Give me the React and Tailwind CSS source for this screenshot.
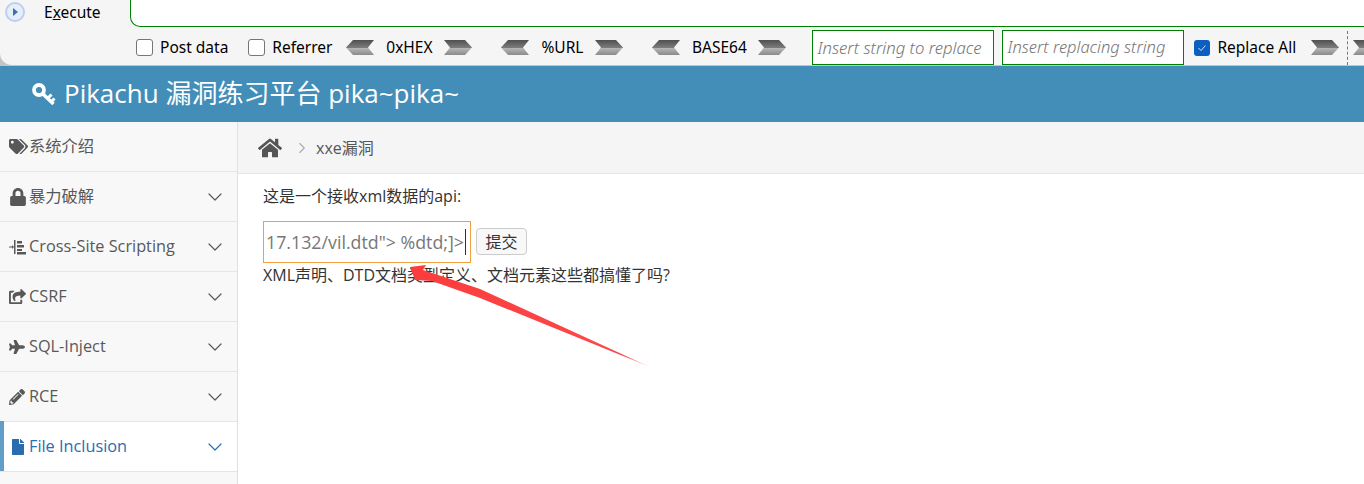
import { FaTags, FaLock, FaShareSquare, FaPlane, FaPencilAlt, FaFile, FaHome } from 'react-icons/fa'
import { ChevronDown, ChevronRight } from 'lucide-react'

const sans = 'font-["Open_Sans","Noto_Sans_CJK_SC",sans-serif]'

function ListIcon() {
  return (
    <svg width="17" height="16" viewBox="0 0 17 16" fill="#585858">
      <path d="M0 7.500h3V6l2 2-2 2V8.500H0z" />
      <rect x="5" y="1" width="1.500" height="14" />
      <rect x="8" y="2" width="5" height="2.500" />
      <rect x="8" y="6" width="7" height="2.500" />
      <rect x="8" y="10" width="5" height="2" />
      <rect x="8" y="13" width="9" height="2.500" />
    </svg>
  )
}

function KeyIcon() {
  return (
    <svg width="25" height="24" viewBox="0 0 25 24" fill="none" stroke="white">
      <circle cx="8" cy="8" r="5" strokeWidth="3.800" />
      <path d="M11.500 11.500L22.500 22" strokeWidth="3.500" />
      <path d="M17 16l3.500-3.500M20.500 19.500l3-3" strokeWidth="3" />
    </svg>
  )
}

function Arrow({ left }) {
  // grey encoding arrows in the hackbar, they only differ by direction
  const points = left ? '0,7.500 7,0 28,0 22,7.500 28,15 7,15' : '0,0 21,0 28,7.500 21,15 0,15 6,7.500'
  const id = left ? 'barLeft' : 'barRight'
  return (
    <svg width="28" height="15" viewBox="0 0 28 15" className="shrink-0">
      <defs>
        <linearGradient id={id} x1="0" y1="0" x2="0" y2="1">
          <stop offset="0" stopColor="#4f4f4f" />
          <stop offset="0.5" stopColor="#7b7b7b" />
          <stop offset="0.55" stopColor="#b5b5b5" />
          <stop offset="1" stopColor="#8a8a8a" />
        </linearGradient>
      </defs>
      <polygon points={points} fill={`url(#${id})`} />
    </svg>
  )
}

function Encoder({ label, width, className }) {
  return (
    <div className={`flex items-center shrink-0 ${className}`}>
      <Arrow left />
      <span className={`${width} text-center text-[15.500px] leading-[20px] -mt-[2px] text-black`}>{label}</span>
      <Arrow />
    </div>
  )
}

function Check({ label, className }) {
  return (
    <label className={`flex items-center shrink-0 whitespace-nowrap text-[15.500px] text-black ${className}`}>
      <span className="w-[17px] h-[17px] rounded-[3px] border border-[#767676] bg-white mr-[7px]" />
      {label}
    </label>
  )
}

function HackBar() {
  return (
    <div className="h-[66px] bg-[#c4c4c4] font-['Noto_Sans',sans-serif]">
      <div className="h-[65px] bg-[#f5f5f5] rounded-bl-[12px] flex flex-col">
        <div className="h-[27px] flex">
          <div className="w-[130px] flex items-start pt-[2px] pl-[5px]">
            <div className="w-[20px] h-[20px] rounded-full bg-[#e6eefa] border-2 border-[#bccfee] flex items-center justify-center">
              <div className="w-0 h-0 border-y-[4px] border-y-transparent border-l-[5px] border-l-[#3f6fb5] ml-[1px]" />
            </div>
            <span className="ml-[19px] text-[15.500px] leading-[20px] text-black">
              E<span className="underline">x</span>ecute
            </span>
          </div>
          <div className="flex-1 bg-white border-l border-b border-[#008000] rounded-bl-[10px]" />
        </div>
        <div className="flex items-center h-[38px] pt-[3px] overflow-hidden">
          <Check label="Post data" className="ml-[136px]" />
          <Check label="Referrer" className="ml-[20px]" />
          <Encoder label="0xHEX" width="w-[70px]" className="ml-[14px]" />
          <Encoder label="%URL" width="w-[66px]" className="ml-[29px]" />
          <Encoder label="BASE64" width="w-[78px]" className="ml-[29px]" />
          <div className="ml-[26px] shrink-0 w-[182px] h-[35px] bg-white border border-[#008000] pl-[4px] flex items-center italic font-light text-[16.700px] text-[#757575]">
            Insert string to replace
          </div>
          <div className="ml-[8px] shrink-0 w-[182px] h-[35px] bg-white border border-[#008000] pl-[4px] flex items-center italic font-light text-[16.500px] text-[#757575]">
            Insert replacing string
          </div>
          <label className="ml-[10px] shrink-0 whitespace-nowrap flex items-center text-[15.500px] text-black">
            <span className="w-[16px] h-[16px] rounded-[3px] bg-[#0b5fc0] mr-[7px] flex items-center justify-center">
              <svg width="10" height="8" viewBox="0 0 10 8" fill="none" stroke="#cfe2f8" strokeWidth="1">
                <path d="M1.500 4l2.500 2.500L8.500 1.500" />
              </svg>
            </span>
            Replace All
          </label>
          <div className="ml-[15px]"><Arrow /></div>
          <div className="ml-[8px] shrink-0 h-[34px] border-l border-dashed border-[#777]" />
          <div className="ml-[5px]"><Arrow /></div>
        </div>
      </div>
    </div>
  )
}

const menu = [
  { name: '系统介绍', icon: <FaTags size={19} />, noArrow: true },
  { name: '暴力破解', icon: <FaLock size={18} /> },
  { name: 'Cross-Site Scripting', icon: <ListIcon /> },
  { name: 'CSRF', icon: <FaShareSquare size={17} /> },
  { name: 'SQL-Inject', icon: <FaPlane size={16} /> },
  { name: 'RCE', icon: <FaPencilAlt size={16} /> },
  { name: 'File Inclusion', icon: <FaFile size={16} className="ml-[1px]" />, active: true },
]

function Sidebar() {
  return (
    <div className="w-[238px] shrink-0 bg-[#f8f8f8] border-r border-[#e0e0e0]">
      {menu.map((item) => (
        <div
          key={item.name}
          className={`relative h-[50px] flex items-center pl-[9px] pr-[10px] border-b border-[#e5e5e5] text-[16.300px] ${item.active ? 'bg-white text-[#2b6cb0]' : 'text-[#585858]'}`}
        >
          {item.active && <div className="absolute left-0 -top-[1px] bottom-0 w-[4px] bg-[#629cc9]" />}
          <span className="w-[20px]">{item.icon}</span>
          <span className="flex-1">{item.name}</span>
          {!item.noArrow && <ChevronDown size={24} strokeWidth={1.200} />}
        </div>
      ))}
    </div>
  )
}

function Main() {
  return (
    <div className="flex-1">
      <div className="h-[52px] bg-[#f5f5f5] border-b border-[#e5e5e5] flex items-center pl-[20px] text-[#555]">
        <FaHome size={24} color="#555" />
        <ChevronRight size={18} strokeWidth={1.500} className="ml-[11px] text-[#a8adb5]" />
        <span className="ml-[5px] text-[16px] mt-[1px]">xxe漏洞</span>
      </div>
      <div className="pl-[25px] pt-[12px] text-[16px] text-[#333]">
        <p className="leading-[20px]">这是一个接收xml数据的api:</p>
        <div className="flex items-start mt-[15px]">
          <div className="w-[208px] h-[42px] border border-[#f0a040] overflow-hidden flex items-center justify-end text-[#777] text-[17.800px] whitespace-nowrap pr-[4px]">
            <span className="border-r border-[#333] pr-[1px] shrink-0">17.132/vil.dtd"&gt; %dtd;]&gt;</span>
          </div>
          <button className="ml-[5px] mt-[7px] w-[51px] h-[27px] rounded-[4px] border border-[#ccc] bg-[#f8f8f8] text-[16px] leading-none text-[#333]">提交</button>
        </div>
        <p className="leading-[20px] mt-[2px]">XML声明、DTD文档类型定义、文档元素这些都搞懂了吗?</p>
      </div>
    </div>
  )
}

export default function App() {
  return (
    <div className={`relative w-[1364px] h-[484px] overflow-hidden bg-white ${sans}`}>
      <HackBar />
      <div className="h-[56px] bg-[#438eb9] flex items-center pl-[31px] text-white text-[26px]">
        <KeyIcon />
        <span className="ml-[8px] -mt-[1px]">Pikachu 漏洞练习平台 pika~pika~</span>
      </div>
      <div className="flex h-[362px]">
        <Sidebar />
        <Main />
      </div>
      {/* red arrow annotation on top of the screenshot */}
      <svg className="absolute left-0 top-0 pointer-events-none" width="1364" height="484">
        <defs>
          <linearGradient id="redArrow" gradientUnits="userSpaceOnUse" x1="411" y1="265" x2="650" y2="367">
            <stop offset="0" stopColor="#fb3c3c" />
            <stop offset="0.88" stopColor="#fb4a4a" />
            <stop offset="1" stopColor="#ffc8c8" />
          </linearGradient>
        </defs>
        <polygon points="410,267 426,265 423,270 480,289 650,367 480,298 432,281 415,280" fill="url(#redArrow)" />
      </svg>
    </div>
  )
}
